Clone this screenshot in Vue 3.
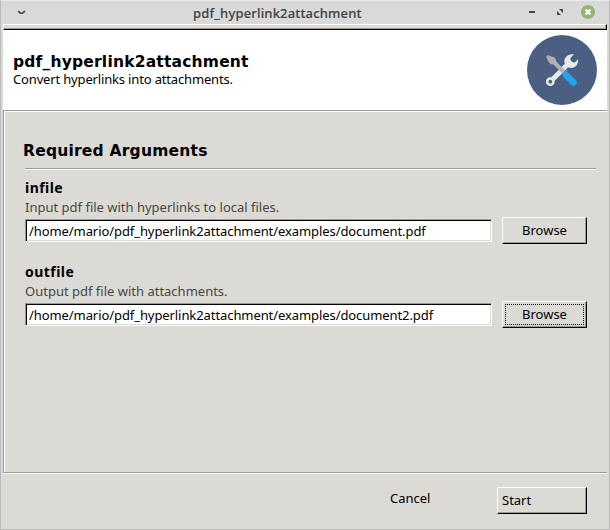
<script setup>
const fields = [
  {
    name: 'infile',
    help: 'Input pdf file with hyperlinks to local files.',
    value: '/home/mario/pdf_hyperlink2attachment/examples/document.pdf',
    focused: false,
  },
  {
    name: 'outfile',
    help: 'Output pdf file with attachments.',
    value: '/home/mario/pdf_hyperlink2attachment/examples/document2.pdf',
    focused: true,
  },
]
</script>

<template>
  <div class="window">
    <div class="titlebar">
      <svg class="chevron" width="10" height="6" viewBox="0 0 10 6"><path d="M1 1.2 L3.6 3.2 H5.4 L8 1.2" /></svg>
      <span class="title">pdf_hyperlink2attachment</span>
      <svg class="controls" width="68" height="16" viewBox="0 0 68 16">
        <rect x="1" y="7" width="6" height="2" fill="#444" />
        <path d="M29 7v4h4zM31 5h4v4z" fill="#444" />
        <circle cx="60" cy="8" r="7" fill="#92b372" />
        <path d="M57.500 5.500l5 5M62.500 5.500l-5 5" stroke="#fff" stroke-width="2" />
      </svg>
    </div>
    <div class="menubar"></div>
    <header class="header">
      <div class="heading">
        <h1>pdf_hyperlink2attachment</h1>
        <p>Convert hyperlinks into attachments.</p>
      </div>
      <svg class="logo" width="70" height="70" viewBox="0 0 70 70">
        <circle cx="35" cy="35" r="35" fill="#4b5f83" />
        <path d="M24.500 45.500L43 27" stroke="#e8e8e8" stroke-width="4.800" />
        <circle cx="23.300" cy="46.700" r="3.100" fill="#4b5f83" stroke="#e8e8e8" stroke-width="2.500" />
        <path d="M47 19.400C41 18.200 35.500 23 38 29L41.500 32.500C47 34.500 52 30 51 24.300L48 27.200C46 28.200 42.500 25.500 43.600 22.800Z" fill="#e8e8e8" />
        <path d="M19.300 22.500Q19 20.500 21 20.200L27.600 22.400Q29 24 29.300 26.500L37.800 35L35 38L26.500 29.500Q24 29.500 22.300 28Z" fill="#b0b0b0" />
        <path d="M39.300 40.300L46.500 47.300" stroke="#22a5f1" stroke-width="6.600" stroke-linecap="round" />
        <path d="M35.300 39.800L39.800 35.300" stroke="#22a5f1" stroke-width="2" />
      </svg>
    </header>
    <main class="panel">
      <h2>Required Arguments</h2>
      <div class="rule"></div>
      <section v-for="field in fields" :key="field.name" class="field">
        <h3>{{ field.name }}</h3>
        <p class="help">{{ field.help }}</p>
        <div class="row">
          <div class="entry"><span>{{ field.value }}</span></div>
          <button class="button browse" :class="{ focused: field.focused }"><span>Browse</span></button>
        </div>
      </section>
    </main>
    <footer class="footer">
      <span class="cancel">Cancel</span>
      <button class="button start"><span>Start</span></button>
    </footer>
  </div>
</template>

<style>
body { background: #dbdad5; }
</style>

<style scoped>
* { box-sizing: border-box; margin: 0; padding: 0; }
.window {
  width: 610px; height: 530px; padding: 0 2px 0 2px;
  border: 1px solid #bbb; border-top-color: #eaeaea;
  background: #dbdad5; color: #000;
  display: flex; flex-direction: column; overflow: hidden;
  font: 13px/18px "Noto Sans", sans-serif; white-space: nowrap;
}
.titlebar { height: 23px; margin: 0 -2px; background: #d9d9d9; display: flex; align-items: center; color: #444; flex: none; }
.chevron { margin-left: 16px; width: 10px; fill: none; stroke: #444; stroke-width: 1.6; }
.title { flex: 1; margin-left: 166px; font-weight: 500; line-height: 22px; padding-top: 1px; letter-spacing: 0.17px; -webkit-text-stroke: 0.15px #444; }
.controls { margin-right: 13px; margin-top: -1px; }
.menubar { height: 6px; width: 604px; border: 1px solid; border-color: #fff #000 #000 #fff; box-shadow: inset -1px -1px #9d9b93; flex: none; }
.header { height: 80px; background: #fff; display: flex; justify-content: space-between; padding: 5px 10px 0 10px; flex: none; width: 604px; }
.heading { padding-top: 18px; }
h1 { font: bold 15.5px/19px "DejaVu Sans", sans-serif; letter-spacing: 0.2px; }
.heading p { line-height: 15px; letter-spacing: -0.16px; }
.logo { flex: none; }
.panel { height: 362px; width: 604px; border: 1px solid #9b9a93; border-right: 0; border-bottom: 0; box-shadow: inset 1px 1px #fff; padding: 29px 11px 0 19px; flex: none; }
h2 { font: bold 15.5px/22px "DejaVu Sans", sans-serif; letter-spacing: 0.22px; }
.rule { height: 2px; margin: 6px 0 9px 2px; border-top: 1px solid #9b9a93; border-bottom: 1px solid #fff; }
.field { padding-left: 2px; height: 84px; }
h3 { font-size: 14px; line-height: 18px; letter-spacing: 0.45px; }
.help { color: #474747; line-height: 20px; height: 22px; }
.row { display: flex; gap: 10px; }
.entry { width: 467px; height: 23px; background: #fff; border: 1px solid; border-color: #9b9a93 #fff #fff #9b9a93; box-shadow: inset 1px 1px #000, inset -1px -1px #dbdad5; line-height: 22px; padding-left: 3px; letter-spacing: -0.08px; }
.button { font: inherit; color: #000; background: #dbdad5; border: 1px solid; border-color: #fff #000 #000 #fff; box-shadow: inset -1px -1px #9b9a93; height: 27px; border-radius: 0; }
.browse { width: 85px; margin-top: -2px; display: grid; place-items: center; padding: 2px 3px 3px 2px; }
.browse span { width: 79px; height: 21px; line-height: 20px; }
.focused span { border: 1px dotted #000; line-height: 18px; }
.footer { flex: 1; width: 604px; border-top: 1px solid #9b9a93; box-shadow: inset 0 1px #fff; display: flex; padding: 14px 0 0 387px; }
.cancel { width: 107px; padding-top: 2px; }
.start { width: 90px; text-align: left; padding: 0 0 2px 4px; }
</style>
